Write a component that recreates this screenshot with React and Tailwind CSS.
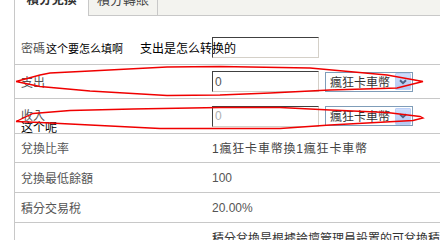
import React from "react";

const CJK = "font-['Noto_Sans_CJK_TC','Noto_Sans_CJK_SC',sans-serif]";

function Select() {
  return (
    <div className="ml-[6px] flex h-[20px] w-[88px] items-center border border-[#7f9db9] bg-white">
      <span className="flex-1 pl-[4px] text-[12px] leading-[12px] text-[#333]">瘋狂卡車幣</span>
      <span className="mr-px flex h-[17px] w-[16px] items-center justify-center rounded-[1px] border border-[#bcd0f7] bg-gradient-to-b from-[#d0defd] to-[#b4c8f2]">
        <svg width="8" height="6" viewBox="0 0 8 6">
          <path d="M1 1.2 L4 4.2 L7 1.2" fill="none" stroke="#4d6185" strokeWidth="2" />
        </svg>
      </span>
    </div>
  );
}

function Row({ h, children, className = "" }) {
  return (
    <div className={`flex border-b border-[#c8c8c8] ${h} ${className}`}>{children}</div>
  );
}

export default function App() {
  return (
    <div className={`relative h-[240px] w-[440px] overflow-hidden bg-white ${CJK}`}>
      <div className="ml-[14px] h-full border-l border-[#c8c8c8]">
        {/* tabs */}
        <div className="flex h-[16px] bg-[#f3f3ef]">
          <div className="flex h-full w-[74px] justify-center border-r border-[#c8c8c8] bg-white">
            <span className="-mt-[7px] block text-[12.5px] font-bold leading-[12px] text-[#333]">積分兌換</span>
          </div>
          <div className="flex h-full w-[69px] justify-center border-r border-b border-[#c8c8c8]">
            <span className="-mt-[7px] block text-[13px] leading-[12px] text-[#444]">積分轉賬</span>
          </div>
          <div className="h-full flex-1 border-b border-[#c8c8c8]" />
        </div>

        {/* password */}
        <Row h="h-[49px]" className="items-end pb-[6px]">
          <div className="flex h-[21px] w-[197px] shrink-0 items-center whitespace-nowrap pl-[6px] text-[12px] leading-[12px]">
            <span className="text-[#555]">密碼</span>
            <span className="ml-px text-[11px] text-black">这个要怎么填啊</span>
            <span className="ml-[17px] text-black">支出是怎么转换的</span>
          </div>
          <input
            type="password"
            className="h-[21px] w-[107px] border border-t-[#404040] border-l-[#404040] border-r-[#d4d0c8] border-b-[#d4d0c8] bg-transparent"
          />
        </Row>

        {/* pay */}
        <Row h="h-[34px]" className="items-center">
          <div className="w-[197px] shrink-0 pl-[6px] text-[12px] leading-[12px] text-[#555]">支出</div>
          <div className="flex h-[21px] w-[107px] items-center border border-t-[#404040] border-l-[#404040] border-r-[#d4d0c8] border-b-[#d4d0c8] pl-[2px] font-['Liberation_Sans',sans-serif] text-[12px] text-[#555]">
            0
          </div>
          <Select />
        </Row>

        {/* income */}
        <Row h="h-[35px]" className="items-center">
          <div className="mt-[10px] w-[197px] self-start shrink-0 pl-[6px] text-[12px] leading-[12px]">
            <div className="text-[#555]">收入</div>
            <div className="text-black">这个呢</div>
          </div>
          <div className="flex h-[21px] w-[107px] items-center border border-t-[#404040] border-l-[#404040] border-r-[#d4d0c8] border-b-[#d4d0c8] pl-[2px] font-['Liberation_Sans',sans-serif] text-[12px] text-[#b0b0b0]">
            0
          </div>
          <Select />
        </Row>

        <Row h="h-[29px]" className="items-center text-[12px] leading-[12px]">
          <div className="w-[197px] shrink-0 pl-[6px] text-[#555]">兌換比率</div>
          <div className="tracking-[0.8px] text-[#444]">
            <span className="font-['Liberation_Sans',sans-serif]">1</span>瘋狂卡車幣換
            <span className="font-['Liberation_Sans',sans-serif]">1</span>瘋狂卡車幣
          </div>
        </Row>

        <Row h="h-[30px]" className="items-center text-[12px] leading-[12px]">
          <div className="w-[197px] shrink-0 pl-[6px] text-[#555]">兌換最低餘額</div>
          <div className="font-['Liberation_Sans',sans-serif] text-[#555]">100</div>
        </Row>

        <Row h="h-[30px]" className="items-center text-[12px] leading-[12px]">
          <div className="w-[197px] shrink-0 pl-[6px] text-[#555]">積分交易稅</div>
          <div className="font-['Liberation_Sans',sans-serif] text-[#555]">20.00%</div>
        </Row>

        <div className="flex h-[30px] items-center text-[12px] leading-[12px]">
          <div className="w-[197px] shrink-0" />
          <div className="whitespace-nowrap text-[#333]">積分兌換是根據論壇管理員設置的可兌換積分</div>
        </div>
      </div>

      {/* red annotation marks */}
      <svg className="pointer-events-none absolute left-0 top-0" width="440" height="240">
        <polyline
          fill="none"
          stroke="#f00000"
          strokeWidth="1.3"
          points="16,81.5 40,75 50,73 90,71 167,67 220,66.5 310,68 387,75 423,81.5 397,88 330,90 270,93 220,95 167,95.5 90,91 40,86.5 16,81.5"
        />
        <polyline
          fill="none"
          stroke="#f00000"
          strokeWidth="1.3"
          points="16,121.5 33,113.5 70,110.5 133,109 220,107.5 280,107.5 330,110 387,112.5 420,116.5 423,118 413,120.5 330,125 280,128.5 220,128.5 160,128.5 90,125 40,122.5 16,121.5"
        />
      </svg>
    </div>
  );
}
